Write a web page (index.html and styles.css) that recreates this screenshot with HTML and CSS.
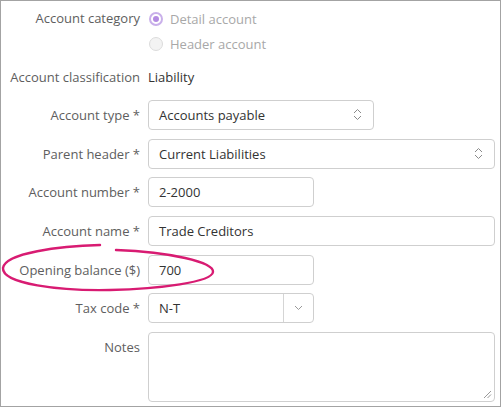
FILE: index.html
```html
<!DOCTYPE html>
<html>
<head>
<meta charset="utf-8">
<link rel="stylesheet" href="styles.css">
</head>
<body>
<div class="frame">
  <div class="form">
    <div class="label label-top">Account category</div>
    <div class="radios">
      <div class="radio-opt"><span class="radio checked"><span class="dot"></span></span><span class="radio-text">Detail account</span></div>
      <div class="radio-opt"><span class="radio"></span><span class="radio-text">Header account</span></div>
    </div>

    <div class="label label-class">Account classification</div>
    <div class="value value-class">Liability</div>

    <div class="label">Account type *</div>
    <div class="field"><div class="box select w-type"><span>Accounts payable</span>
      <svg class="updown" width="9" height="13" viewBox="0 0 9 13"><path d="M1 5 L4.5 1.5 L8 5 M1 8 L4.5 11.5 L8 8" fill="none" stroke="#8a8a8a" stroke-width="1"/></svg></div></div>

    <div class="label">Parent header *</div>
    <div class="field"><div class="box select w-full"><span>Current Liabilities</span>
      <svg class="updown" width="9" height="13" viewBox="0 0 9 13"><path d="M1 5 L4.5 1.5 L8 5 M1 8 L4.5 11.5 L8 8" fill="none" stroke="#8a8a8a" stroke-width="1"/></svg></div></div>

    <div class="label">Account number *</div>
    <div class="field"><div class="box w-short">2-2000</div></div>

    <div class="label">Account name *</div>
    <div class="field"><div class="box w-full">Trade Creditors</div></div>

    <div class="label">Opening balance ($)</div>
    <div class="field"><div class="box w-short">700</div></div>

    <div class="label">Tax code *</div>
    <div class="field"><div class="box combo w-short"><span class="combo-text">N-T</span><span class="combo-btn">
      <svg width="9" height="6" viewBox="0 0 9 6"><path d="M1 1 L4.5 4.5 L8 1" fill="none" stroke="#999" stroke-width="1"/></svg></span></div></div>

    <div class="label">Notes</div>
    <div class="field"><div class="box textarea w-full">
      <svg class="grip" width="9" height="9" viewBox="0 0 9 9"><path d="M8 1 L1 8 M8 4.5 L4.5 8" fill="none" stroke="#999" stroke-width="1"/></svg></div></div>
  </div>
  <svg class="ring" width="501" height="408" viewBox="0 0 501 408"><path d="M100,245 C60,246 5,253 3,268 C2,284 60,291 110,290 C160,289 212,282 213,272 C214,262 170,252 116,250" fill="none" stroke="#d81b72" stroke-width="2.4" stroke-linecap="round"/></svg>
</div>
</body>
</html>
```
FILE: styles.css
```css
html, body {
  margin: 0;
  padding: 0;
  background: #fff;
}
body {
  font-family: "Open Sans", "Noto Sans", sans-serif;
  font-size: 13px;
  color: #333;
}
.frame {
  position: relative;
  width: 501px;
  height: 407px;
  box-sizing: border-box;
  border: 1px solid #a3a3a3;
  padding: 5px 6px 0 0;
}
.form {
  display: grid;
  grid-template-columns: 139px 1fr;
  column-gap: 8px;
  row-gap: 8.667px;
}
.label {
  text-align: right;
  color: #5e5e5e;
  line-height: 30px;
  white-space: nowrap;
}
.label-top {
  line-height: 25px;
}
.radios {
  display: flex;
  flex-direction: column;
}
.radio-opt {
  display: flex;
  align-items: center;
  height: 25px;
}
.radio {
  width: 14px;
  height: 14px;
  box-sizing: border-box;
  border-radius: 50%;
  border: 1px solid #dcdcdc;
  background: #f3f3f3;
  margin-left: 1px;
  margin-right: 7px;
  display: flex;
  align-items: center;
  justify-content: center;
}
.radio.checked {
  border: 2px solid #c9b0ea;
  background: #fff;
}
.dot {
  width: 6px;
  height: 6px;
  border-radius: 50%;
  background: #b48ce2;
}
.radio-text {
  color: #a8a8a8;
}
.label-class, .value-class {
  line-height: 25px;
  margin-top: 0.33px;
  margin-bottom: 1.33px;
}
.value {
  color: #333;
}
.box {
  height: 30px;
  box-sizing: border-box;
  border: 1px solid #cfcfcf;
  border-radius: 4px;
  padding: 0 10px;
  line-height: 28px;
  color: #333;
  background: #fff;
  position: relative;
}
.w-type { width: 226px; }
.w-full { width: 347px; }
.w-short { width: 166px; }
.select {
  display: flex;
  justify-content: space-between;
  align-items: center;
  padding-right: 11px;
}
.updown { display: block; }
.combo {
  display: flex;
  padding: 0;
}
.combo-text {
  flex: 1;
  padding-left: 10px;
}
.combo-btn {
  width: 29px;
  border-left: 1px solid #d5d5d5;
  display: flex;
  align-items: center;
  justify-content: center;
}
.combo-btn svg { display: block; }
.textarea {
  height: 70px;
}
.grip {
  position: absolute;
  right: 2px;
  bottom: 2px;
}
.ring {
  position: absolute;
  left: -1px;
  top: -1px;
  pointer-events: none;
}
```
